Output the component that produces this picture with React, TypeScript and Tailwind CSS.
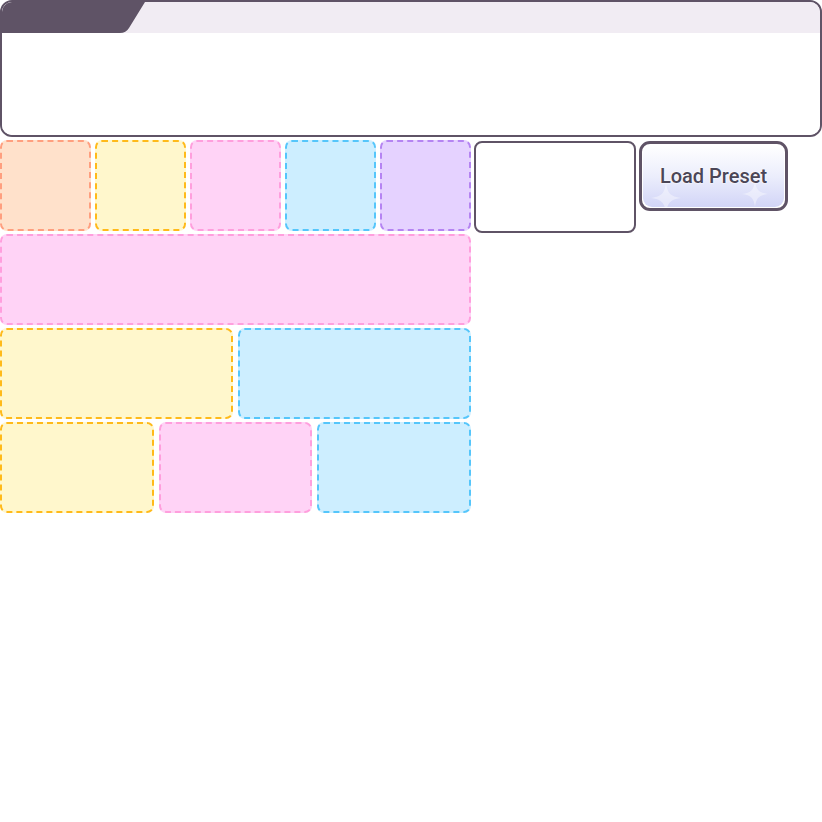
import React from 'react';

// --- tile palette ---
const tone = {
  peach: 'bg-[#ffe1cb] border-[#ff9f7f]',
  yellow: 'bg-[#fff7cc] border-[#ffba1a]',
  pink: 'bg-[#ffd3f6] border-[#ff9fdd]',
  blue: 'bg-[#cdeeff] border-[#55c6fb]',
  purple: 'bg-[#e5d2ff] border-[#b584f2]',
};

type Tone = keyof typeof tone;

const Tile: React.FC<{ t: Tone; className?: string }> = ({ t, className = '' }) => (
  <div className={`h-[91px] rounded-[7px] border-2 border-dashed ${tone[t]} ${className}`} />
);

const Sparkle: React.FC<{ className: string }> = ({ className }) => (
  <svg viewBox="0 0 20 20" className={`absolute ${className}`}>
    <path d="M10 0 C11 7 13 9 20 10 C13 11 11 13 10 20 C9 13 7 11 0 10 C7 9 9 7 10 0Z" fill="#ffffff" fillOpacity="0.4" />
  </svg>
);

const LoadPreset: React.FC = () => (
  <button className="relative mt-px w-[149px] h-[70px] rounded-[11px] border-[3px] border-[#5f5366] bg-white p-px overflow-hidden">
    <div className="relative w-full h-full rounded-[9px] bg-gradient-to-b from-[#ffffff] via-[#eceefc] to-[#d2d5f7] flex items-center justify-center overflow-hidden">
      <Sparkle className="w-[30px] h-[30px] left-[8px] bottom-[-6px]" />
      <Sparkle className="w-[26px] h-[26px] right-[16px] bottom-[0px]" />
      <span className="relative text-[20px] font-medium text-[#4b4657] [font-family:Roboto,'Noto_Sans',sans-serif] [text-shadow:0_0_2px_#fff,0_0_2px_#fff]">
        Load Preset
      </span>
    </div>
  </button>
);

export default function App() {
  return (
    <div className="w-[822px] h-[822px] bg-white">
      {/* header panel */}
      <div className="relative w-[822px] h-[137px] rounded-[12px] border-2 border-[#5f5366] overflow-hidden flex flex-col">
        <div className="relative h-[31px] bg-[#f1ecf3] shrink-0">
          <svg className="absolute left-0 top-0" width="146" height="31" viewBox="0 0 146 31">
            <path d="M0 0 H143 L127 26 Q124 31 118 31 H0 Z" fill="#5f5366" />
          </svg>
        </div>
        <div className="flex-1 bg-white rounded-tl-[8px]" />
      </div>

      <div className="mt-[3px] flex items-start gap-[3px]">
        <div className="w-[471px] flex flex-col gap-[3px]">
          <div className="flex gap-[4px]">
            <Tile t="peach" className="flex-1" />
            <Tile t="yellow" className="flex-1" />
            <Tile t="pink" className="flex-1" />
            <Tile t="blue" className="flex-1" />
            <Tile t="purple" className="flex-1" />
          </div>
          <Tile t="pink" className="w-full" />
          <div className="flex gap-[5px]">
            <Tile t="yellow" className="flex-1" />
            <Tile t="blue" className="flex-1" />
          </div>
          <div className="flex gap-[5px]">
            <Tile t="yellow" className="flex-1" />
            <Tile t="pink" className="flex-1" />
            <Tile t="blue" className="flex-1" />
          </div>
        </div>
        <div className="mt-px w-[162px] h-[92px] rounded-[8px] border-2 border-[#5f5366] bg-white" />
        <LoadPreset />
      </div>
    </div>
  );
}
